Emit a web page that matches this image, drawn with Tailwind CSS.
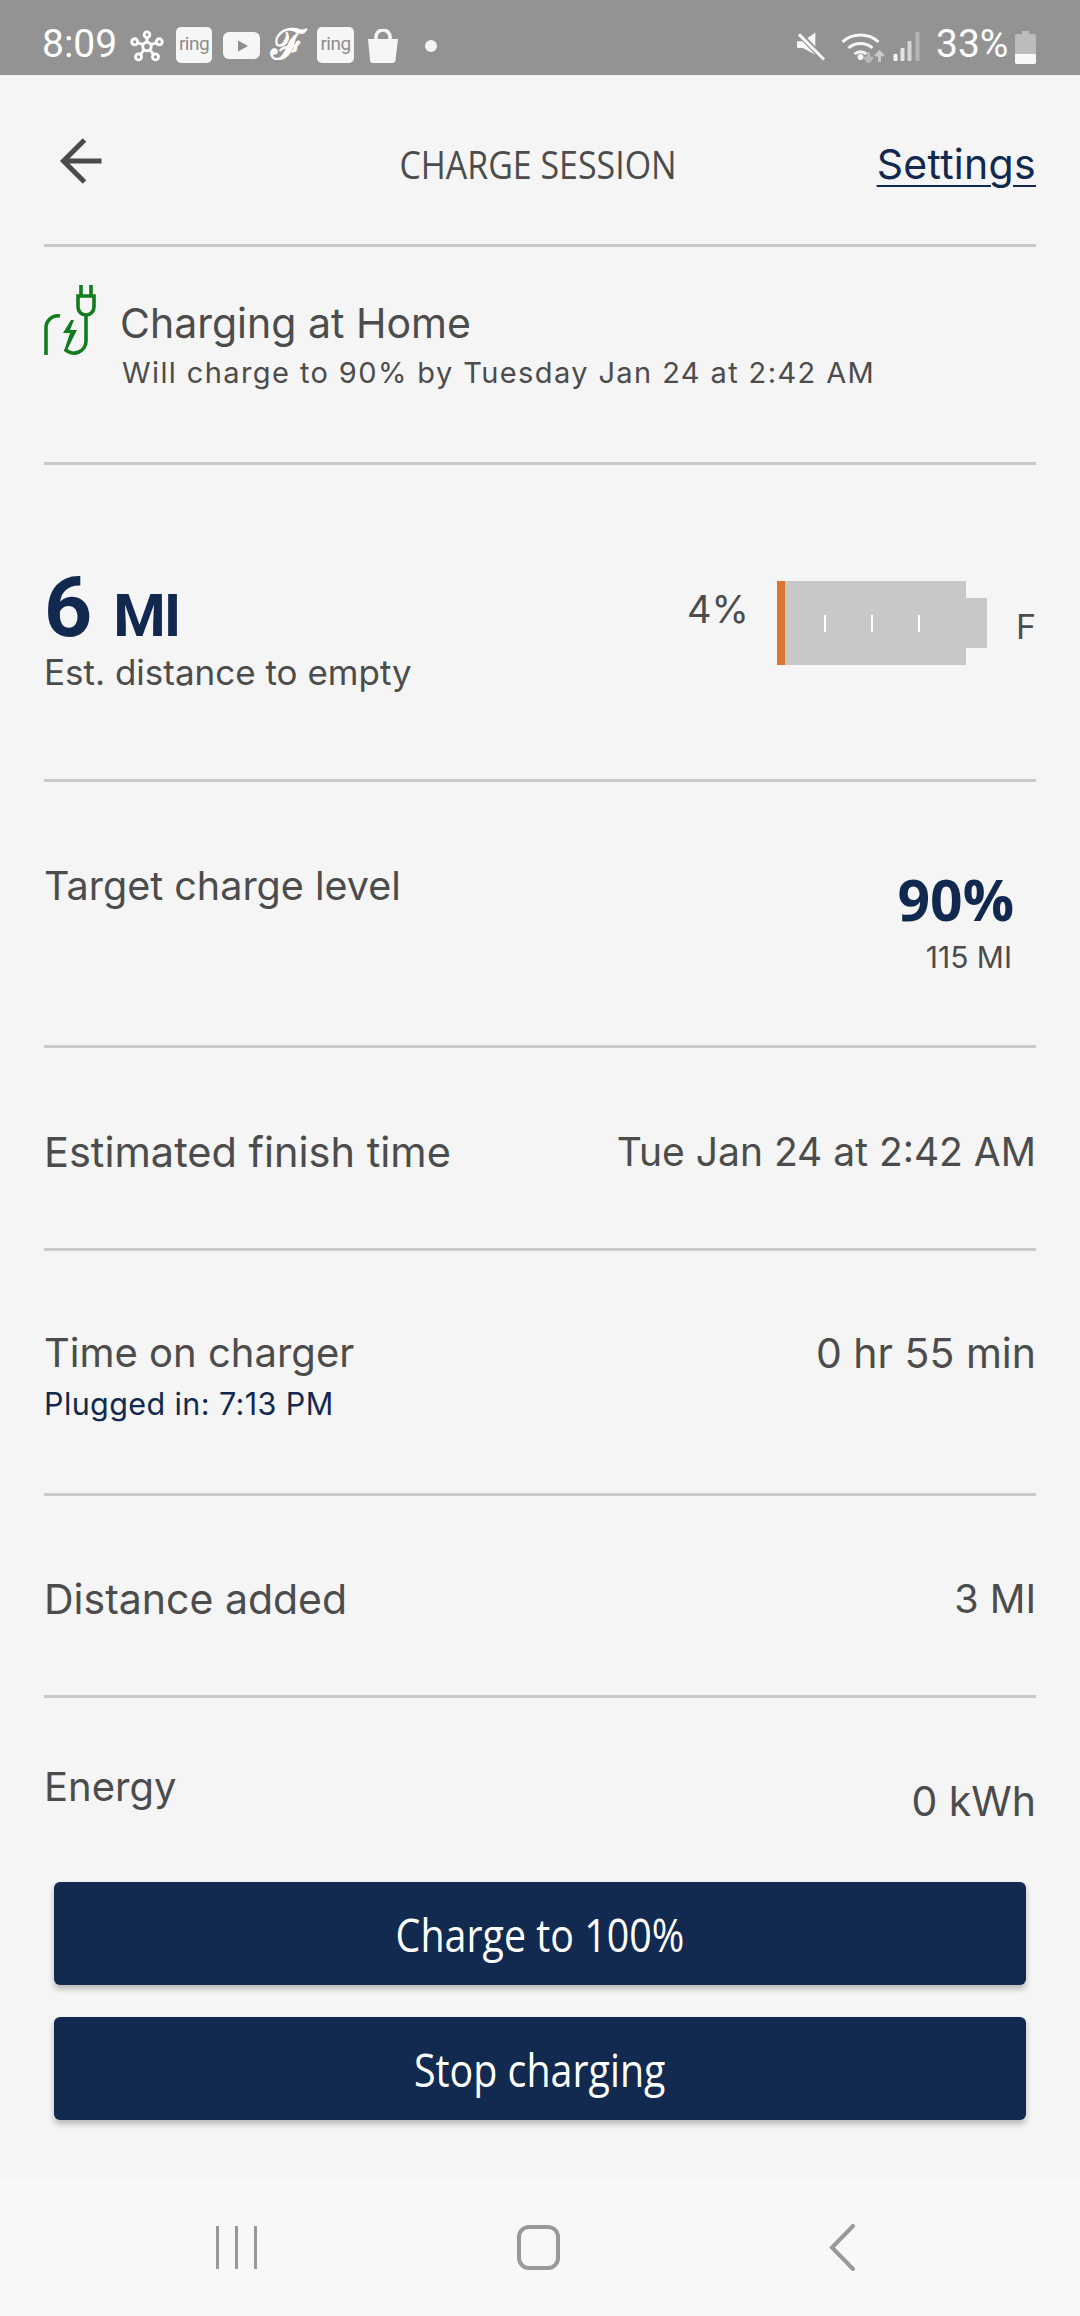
<!DOCTYPE html>
<html><head><meta charset="utf-8"><script src="https://cdn.jsdelivr.net/npm/@tailwindcss/browser@4"></script></head>
<body class="m-0">
<div class="w-[1080px] h-[2316px] overflow-hidden bg-[#f5f5f5] flex flex-col font-['Inter',sans-serif] text-[#4c4c4c]">
  <!-- status bar -->
  <div class="h-[75px] bg-[#939393] flex items-center text-white pl-[42px] pr-[44px] pt-[17px] shrink-0">
    <span class="font-['Roboto',sans-serif] text-[39px] leading-none w-[72px] mt-[-3px]">8:09</span>
    <svg class="ml-[16px]" width="34" height="33" viewBox="0 0 36 34" fill="none" stroke="#fff" stroke-width="3"><circle cx="18" cy="17" r="4.500"/><circle cx="18" cy="4.500" r="3"/><circle cx="5" cy="12" r="3.200"/><circle cx="31" cy="12" r="3.200"/><circle cx="9" cy="28" r="3.200"/><circle cx="27" cy="28" r="3.200"/><path d="M18 8v5M8 13l6 2M28 13l-6 2M11 26l4-6M25 26l-4-6"/></svg>
    <div class="ml-[12px] w-[36px] h-[36px] rounded-[5px] bg-[#f6f6f6] flex items-center justify-center text-[#8d8d8d] text-[19px] leading-none font-['Roboto',sans-serif] tracking-[-0.5px] pb-[3px] mt-[-2px]">ring</div>
    <svg class="ml-[10px]" width="39" height="28" viewBox="0 0 37 28"><rect width="37" height="27" rx="6" fill="#f6f6f6"/><path d="M15 8.500l10 5.500-10 5.500z" fill="#8d8d8d"/></svg>
    <span class="ml-[7px] w-[40px] h-[40px] flex items-center justify-center font-['DejaVu_Serif',serif] font-bold text-[42px] leading-none mt-[-2px]">ℱ</span>
    <div class="ml-[9px] w-[37px] h-[36px] rounded-[5px] bg-[#f6f6f6] flex items-center justify-center text-[#8d8d8d] text-[19px] leading-none font-['Roboto',sans-serif] tracking-[-0.5px] pb-[3px] mt-[-2px]">ring</div>
    <svg class="ml-[12px] mt-[-1px]" width="34" height="34" viewBox="0 0 32 34"><path d="M1 10h30l-2.500 21a3 3 0 0 1-3 3h-19.500a3 3 0 0 1-3-3z" fill="#f6f6f6"/><path d="M9 11v-3a7 7 0 0 1 14 0v3" fill="none" stroke="#f6f6f6" stroke-width="3.500"/></svg>
    <div class="ml-[25px] w-[12px] h-[12px] rounded-full bg-[#f3f3f3]"></div>
    <div class="flex-1"></div>
    <svg width="30" height="30" viewBox="0 0 31 30" fill="#f6f6f6"><path d="M1 10h6l13-9v23l-13-7h-5a1 1 0 0 1-1-1z"/><path d="M3 2l26 27" stroke="#939393" stroke-width="6"/><path d="M3 3l26 26" stroke="#f6f6f6" stroke-width="3"/></svg>
    <svg class="ml-[14px]" width="45" height="33" viewBox="0 0 44 33" fill="none" stroke="#f6f6f6" stroke-width="3"><path d="M2 12a27 27 0 0 1 36 0"/><path d="M8 18a18 18 0 0 1 24 0"/><path d="M14 24a9 9 0 0 1 12 0"/><circle cx="20" cy="27" r="1.500" fill="#f6f6f6"/><path d="M28 22v10M24 27l4 5 4-5" stroke="#b9b9b9"/><path d="M39 32v-10M35 26l4-4 4 4" stroke="#c9c9c9"/></svg>
    <svg class="ml-[8px]" width="28" height="30" viewBox="0 0 27 30"><rect x="0" y="23" width="4" height="7" rx="1" fill="#f6f6f6"/><rect x="7" y="17" width="4" height="13" rx="1" fill="#e4e4e4"/><rect x="14" y="10" width="4" height="20" rx="1" fill="#d6d6d6"/><rect x="22" y="1" width="4" height="29" rx="1" fill="#b5b5b5"/></svg>
    <span class="font-['Roboto',sans-serif] text-[39px] leading-none ml-[15px] w-[70px] mt-[-3px] whitespace-nowrap">33%</span>
    <svg class="ml-[9px] mt-[2px]" width="21" height="33" viewBox="0 0 21 33"><path d="M7 0h7v3h5a2 2 0 0 1 2 2v26a2 2 0 0 1-2 2h-17a2 2 0 0 1-2-2v-26a2 2 0 0 1 2-2h5z" fill="#bcbcbc"/><path d="M0 23h21v8a2 2 0 0 1-2 2h-17a2 2 0 0 1-2-2z" fill="#f8f8f8"/></svg>
  </div>

  <div class="px-[44px] flex flex-col shrink-0">
    <!-- header -->
    <div class="h-[172px] border-b-[3px] border-[#c9c9c9] relative flex items-center justify-between">
      <svg class="ml-[15px] mt-[2px]" width="43" height="46" viewBox="0 0 42 46" fill="none" stroke="#4a4a4a" stroke-width="5"><path d="M42 23h-37M25 2l-21 21 21 21"/></svg>
      <span class="absolute left-[244px] top-[66px] w-[500px] text-center text-[39px] leading-[46px] font-['Open_Sans',sans-serif] whitespace-nowrap scale-x-[0.87]">CHARGE SESSION</span>
      <span class="text-[#12294f] text-[41px] leading-[46px] mt-[8px] underline underline-offset-[6px] decoration-[2px] tracking-[0.3px]">Settings</span>
    </div>
    <!-- charging -->
    <div class="h-[218px] border-b-[3px] border-[#c9c9c9] flex items-start pt-[37px]">
      <svg width="54" height="72" viewBox="0 0 54 72" fill="none" stroke="#107c1e" stroke-width="3.600"><path d="M37 1v11M47 1v11"/><path d="M34 12h16v11a8 8 0 0 1-16 0z"/><path d="M42 31v26a12 12 0 0 1-21 8"/><path d="M2 71v-27a12 12 0 0 1 14-12"/><path d="M27 36l-8 13h7l-6 18 2 1 11-22h-7l4-10z" fill="#107c1e" stroke="none"/></svg>
      <div class="ml-[22px] flex flex-col">
        <span class="text-[41px] leading-[46px] mt-[16px] whitespace-nowrap">Charging at Home</span>
        <span class="text-[29px] leading-[36px] mt-[9px] ml-[2px] tracking-[1.4px] whitespace-nowrap">Will charge to 90% by Tuesday Jan 24 at 2:42 AM</span>
      </div>
    </div>
    <!-- range -->
    <div class="h-[317px] border-b-[3px] border-[#c9c9c9] flex items-start justify-between">
      <div class="flex flex-col pt-[108px]">
        <div class="text-[#12294f] font-bold leading-[70px] whitespace-nowrap font-['Roboto',sans-serif] flex items-baseline"><span class="text-[84px]">6</span><span class="text-[60px] ml-[21px] tracking-[-2px]">MI</span></div>
        <span class="text-[35px] leading-[40px] mt-[1px]">Est. distance to empty</span>
      </div>
      <div class="flex items-start pt-[116px]">
        <span class="text-[38px] leading-[42px] mt-[7px]">4%</span>
        <div class="ml-[28px] flex items-center">
          <div class="w-[189px] h-[84px] bg-[#c8c8c8] flex items-center">
            <div class="w-[8px] h-full bg-[#d9762f]"></div>
            <div class="ml-[39px] w-[2px] h-[17px] bg-white"></div>
            <div class="ml-[45px] w-[2px] h-[17px] bg-white"></div>
            <div class="ml-[45px] w-[2px] h-[17px] bg-white"></div>
          </div>
          <div class="w-[21px] h-[50px] bg-[#c8c8c8]"></div>
        </div>
        <span class="ml-[29px] text-[34px] leading-[40px] mt-[26px]">F</span>
      </div>
    </div>
    <!-- target -->
    <div class="h-[266px] border-b-[3px] border-[#c9c9c9] flex items-start justify-between">
      <span class="text-[39.500px] leading-[46px] mt-[81px]">Target charge level</span>
      <div class="flex flex-col items-end mr-[22px] pt-[87px]">
        <span class="text-[#12294f] font-bold text-[57px] leading-[60px] font-['Open_Sans',sans-serif]">90%</span>
        <span class="text-[30px] leading-[36px] mt-[10px] mr-[2px]">115 MI</span>
      </div>
    </div>
    <!-- finish -->
    <div class="h-[203px] border-b-[3px] border-[#c9c9c9] flex items-center justify-between leading-[46px] pt-[8px]">
      <span class="text-[41.500px]">Estimated finish time</span><span class="text-[39px]">Tue Jan 24 at 2:42 AM</span>
    </div>
    <!-- time -->
    <div class="h-[245px] border-b-[3px] border-[#c9c9c9] flex items-start justify-between pt-[79px] leading-[46px]">
      <div class="flex flex-col"><span class="text-[40px]">Time on charger</span><span class="text-[30.500px] leading-[36px] text-[#12294f] mt-[10px] tracking-[0.4px]">Plugged in: 7:13 PM</span></div>
      <span class="text-[41px]">0 hr 55 min</span>
    </div>
    <!-- distance -->
    <div class="h-[202px] border-b-[3px] border-[#c9c9c9] flex items-center justify-between leading-[46px] pt-[6px]">
      <span class="text-[41px]">Distance added</span><span class="text-[39.500px]">3 MI</span>
    </div>
    <!-- energy -->
    <div class="h-[184px] flex items-start justify-between leading-[46px] pt-[66px]">
      <span class="text-[40px]">Energy</span><span class="mt-[14px] text-[41px]">0 kWh</span>
    </div>
  </div>

  <!-- buttons -->
  <div class="px-[54px] flex flex-col gap-[32px] shrink-0">
    <div class="h-[103px] rounded-[6px] bg-[#122a50] shadow-[0_4px_6px_rgba(0,0,0,0.25)] flex items-center justify-center text-white text-[45px] font-medium font-['Open_Sans',sans-serif] whitespace-nowrap"><span class="scale-x-[0.875] inline-block mt-[2px]">Charge to 100%</span></div>
    <div class="h-[103px] rounded-[6px] bg-[#122a50] shadow-[0_4px_6px_rgba(0,0,0,0.25)] flex items-center justify-center text-white text-[45px] font-medium font-['Open_Sans',sans-serif] whitespace-nowrap"><span class="scale-x-[0.875] inline-block mt-[2px]">Stop charging</span></div>
  </div>

  <!-- nav -->
  <div class="flex-1 mt-[58px] bg-[#f8f8f8] flex items-start">
    <div class="flex gap-[16px] ml-[216px] mt-[48px]">
      <div class="w-[3px] h-[43px] bg-[#999]"></div><div class="w-[3px] h-[43px] bg-[#999]"></div><div class="w-[3px] h-[43px] bg-[#999]"></div>
    </div>
    <div class="ml-[260px] mt-[47px] w-[43px] h-[45px] rounded-[12px] border-[4px] border-[#999]"></div>
    <svg class="ml-[269px] mt-[46px]" width="27" height="47" viewBox="0 0 27 47" fill="none" stroke="#999" stroke-width="4" stroke-linecap="round"><path d="M24 2l-21 21.500 21 21.500"/></svg>
  </div>
</div>
</body></html>
